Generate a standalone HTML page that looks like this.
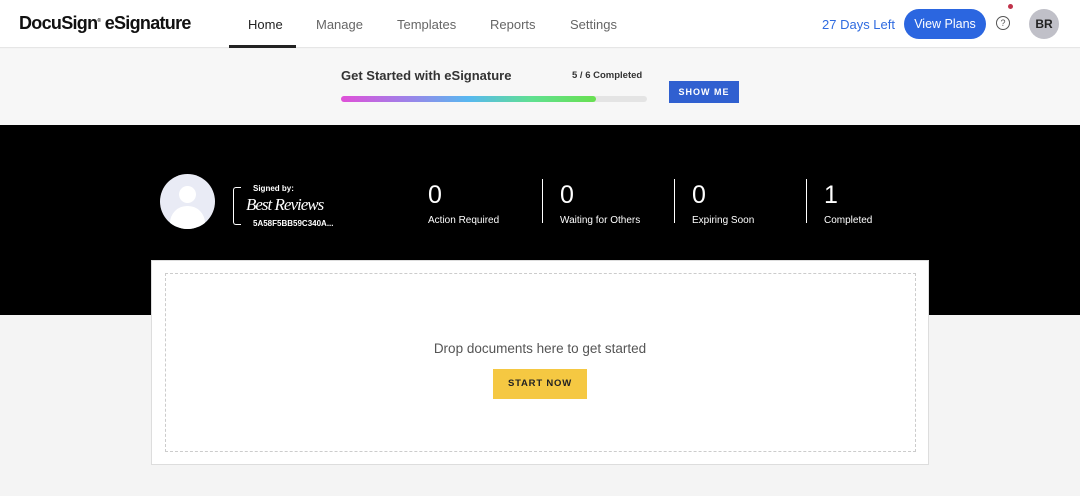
<!DOCTYPE html>
<html><head><style>
*{margin:0;padding:0;box-sizing:border-box}
body{width:1080px;height:496px;background:#f4f4f4;font-family:"Liberation Sans",sans-serif;position:relative;overflow:hidden}
.abs{position:absolute}
.hdr{top:0;left:0;width:1080px;height:48px;background:#fff;border-bottom:1px solid #e6e6e6}
.nav{font-size:13px;color:#666;top:17px}
.gs{top:49px;left:0;width:1080px;height:76px;background:#f7f7f7}
.blk{top:125px;left:0;width:1080px;height:190px;background:#000}
.stat{color:#fff;top:180px}
.stat b{display:block;font-size:25px;font-weight:normal;line-height:30px}
.stat span{font-size:10px}
.sep{width:1px;height:44px;background:#fff;top:179px}
</style></head><body>
<div class="abs hdr"></div>
<div class="abs" style="left:19px;top:13px;font-size:18px;font-weight:bold;letter-spacing:-0.7px;color:#111">DocuSign<sup style="font-size:5px">®</sup> eSignature</div>
<div class="abs nav" style="left:248px;color:#222">Home</div>
<div class="abs" style="left:229px;top:45px;width:67px;height:3px;background:#222"></div>
<div class="abs nav" style="left:316px">Manage</div>
<div class="abs nav" style="left:397px">Templates</div>
<div class="abs nav" style="left:490px">Reports</div>
<div class="abs nav" style="left:570px">Settings</div>
<div class="abs" style="left:822px;top:17px;font-size:13px;color:#2f6be0">27 Days Left</div>
<div class="abs" style="left:904px;top:9px;width:82px;height:30px;border-radius:15px;background:#2b66e0;color:#fff;font-size:12.5px;text-align:center;line-height:30px">View Plans</div>
<div class="abs" style="left:996px;top:16px;width:14px;height:14px;border:1.3px solid #555;border-radius:50%;font-size:9px;text-align:center;line-height:12px;color:#555">?</div>
<div class="abs" style="left:1008px;top:4px;width:5px;height:5px;border-radius:50%;background:#c0334a"></div>
<div class="abs" style="left:1029px;top:9px;width:30px;height:30px;border-radius:50%;background:#c0c0c8;font-size:12px;font-weight:bold;text-align:center;line-height:30px;color:#222">BR</div>
<div class="abs gs"></div>
<div class="abs" style="left:341px;top:68px;font-size:13px;font-weight:bold;color:#333">Get Started with eSignature</div>
<div class="abs" style="left:572px;top:70px;font-size:9.5px;font-weight:bold;color:#333">5 / 6 Completed</div>
<div class="abs" style="left:341px;top:96px;width:306px;height:6px;border-radius:3px;background:#e4e4e4"></div>
<div class="abs" style="left:341px;top:96px;width:255px;height:6px;border-radius:3px;background:linear-gradient(90deg,#e050d8,#a080e8,#58b8f0,#60e090,#68e050)"></div>
<div class="abs" style="left:669px;top:81px;width:70px;height:22px;background:#3060d0;color:#fff;font-size:9px;font-weight:bold;letter-spacing:1px;text-align:center;line-height:22px">SHOW ME</div>
<div class="abs blk"></div>
<div class="abs" style="left:160px;top:174px;width:55px;height:55px;border-radius:50%;background:#e9ebf5;overflow:hidden">
<div class="abs" style="left:19px;top:12px;width:17px;height:17px;border-radius:50%;background:#fff"></div>
<div class="abs" style="left:10px;top:32px;width:35px;height:30px;border-radius:17px 17px 0 0;background:#fff"></div></div>
<div class="abs" style="left:233px;top:187px;width:8px;height:38px;border:1.5px solid #fff;border-right:none;border-radius:3px 0 0 3px"></div>
<div class="abs" style="left:253px;top:184px;font-size:8px;font-weight:bold;color:#fff">Signed by:</div>
<div class="abs" style="left:246px;top:195px;font-size:17px;font-family:'Liberation Serif',serif;font-style:italic;color:#fff;letter-spacing:-1px">Best Reviews</div>
<div class="abs" style="left:253px;top:219px;font-size:8px;font-weight:bold;color:#fff">5A58F5BB59C340A...</div>
<div class="abs stat" style="left:428px"><b>0</b><span>Action Required</span></div>
<div class="abs sep" style="left:542px"></div>
<div class="abs stat" style="left:560px"><b>0</b><span>Waiting for Others</span></div>
<div class="abs sep" style="left:674px"></div>
<div class="abs stat" style="left:692px"><b>0</b><span>Expiring Soon</span></div>
<div class="abs sep" style="left:806px"></div>
<div class="abs stat" style="left:824px"><b>1</b><span>Completed</span></div>
<div class="abs" style="left:151px;top:260px;width:778px;height:205px;background:#fff;border:1px solid #ddd"></div>
<div class="abs" style="left:165px;top:273px;width:751px;height:179px;border:1.5px dashed #ccc"></div>
<div class="abs" style="left:0;width:1080px;text-align:center;top:341px;font-size:13.5px;color:#555">Drop documents here to get started</div>
<div class="abs" style="left:493px;top:369px;width:94px;height:30px;background:#f5c842;font-size:9.5px;font-weight:bold;letter-spacing:0.8px;text-align:center;line-height:30px;color:#222">START NOW</div>
</body></html>
